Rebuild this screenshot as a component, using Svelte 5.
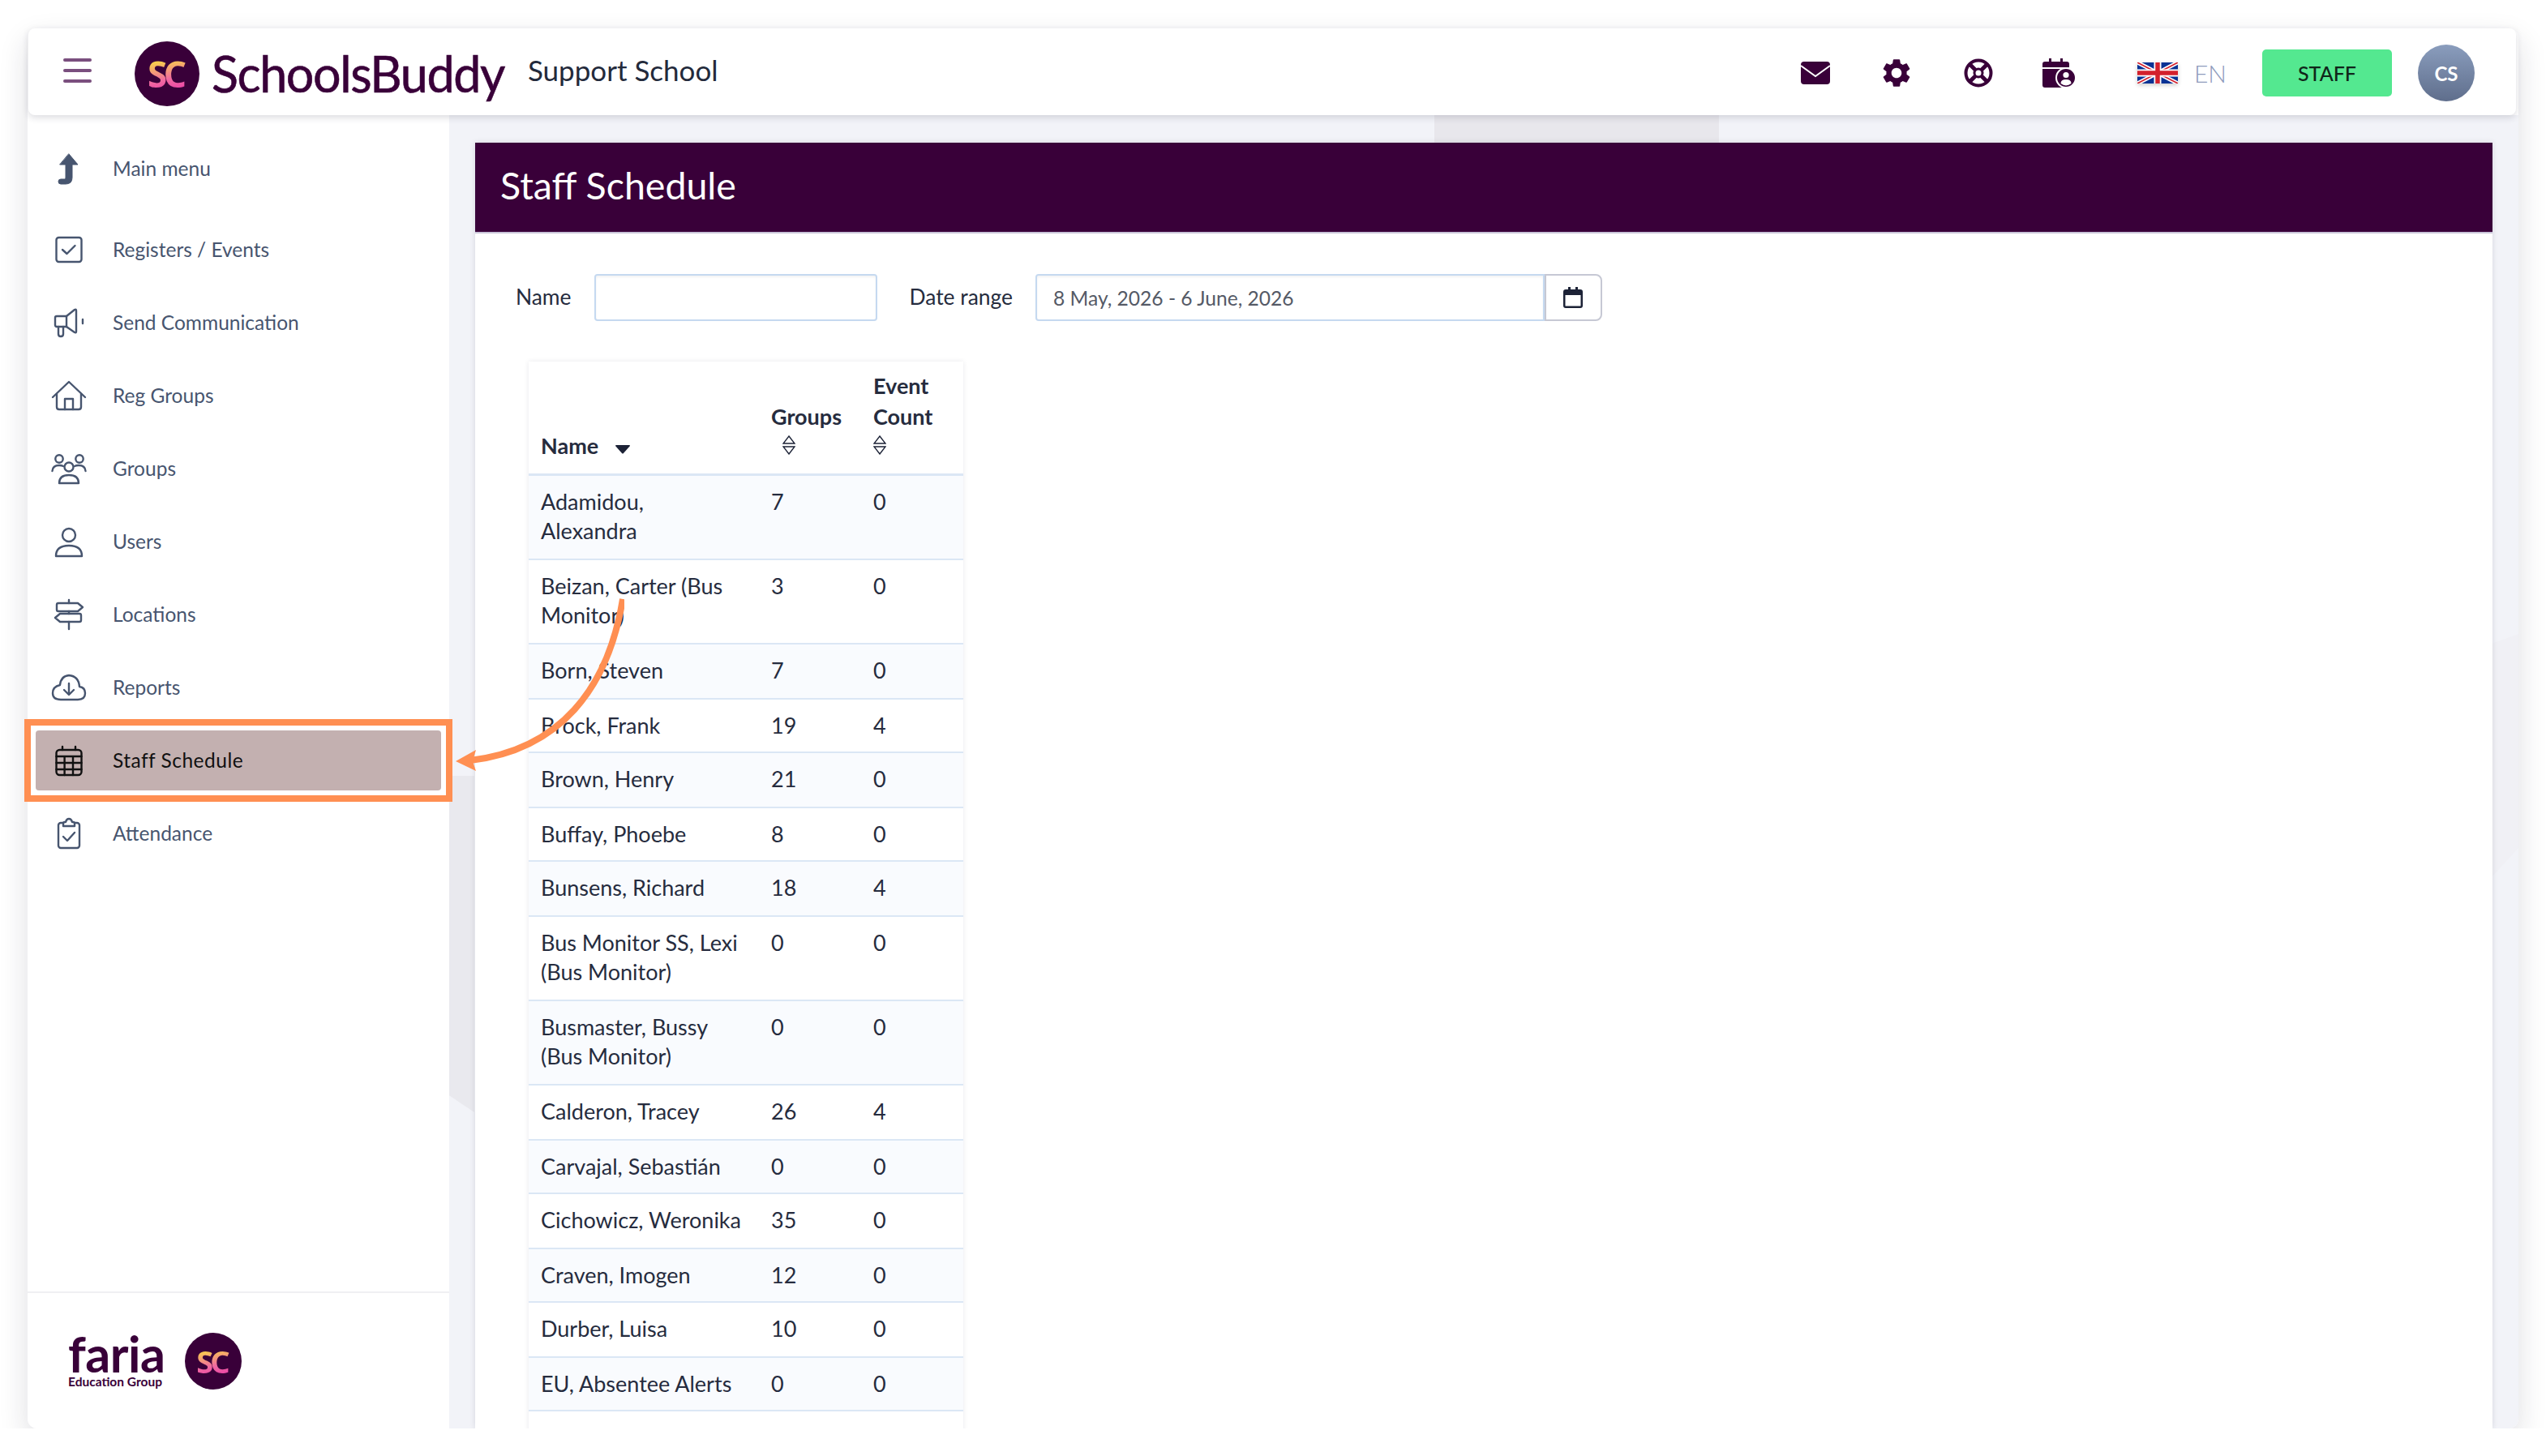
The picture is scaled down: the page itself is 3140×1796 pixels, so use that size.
<script lang="ts">
	const navItems = [
		{ label: 'Main menu', icon: 'back' },
		{ label: 'Registers / Events', icon: 'check' },
		{ label: 'Send Communication', icon: 'megaphone' },
		{ label: 'Reg Groups', icon: 'house' },
		{ label: 'Groups', icon: 'groups' },
		{ label: 'Users', icon: 'user' },
		{ label: 'Locations', icon: 'sign' },
		{ label: 'Reports', icon: 'cloud' },
		{ label: 'Staff Schedule', icon: 'calendar', active: true },
		{ label: 'Attendance', icon: 'clipboard' }
	];

	const icons: Record<string, string> = {
		back: '<path class="solid" d="M22 4 L33 17 H26 V33 Q26 41 18 41 H12 Q9 41 9 38 Q9 35 12 35 H17 Q18 35 18 33 V17 H11 Z"/>',
		check: '<rect x="6.5" y="7" width="31" height="30" rx="3"/><path d="M14 22 L19.5 27 L29.5 17"/>',
		megaphone: '<path d="M7 14 H19 L29 6 Q31 5 31 7 V33 Q31 35 29 34 L19 27 H7 Q5 27 5 25 V16 Q5 14 7 14 Z"/><path d="M9 27 V36 Q9 39 12 39 Q15 39 15 36 V27"/><path d="M19 14 V27"/><path d="M39 18 V23"/>',
		house: '<path d="M2 24 L22 5 L42 24"/><path d="M7 20 V36 Q7 39 10 39 H34 Q37 39 37 36 V20"/><path d="M17 39 V26 H27 V39"/>',
		groups: '<circle cx="10" cy="10" r="4.7"/><circle cx="35" cy="10" r="4.7"/><circle cx="22" cy="20" r="5.5"/><path d="M10 40 Q10 30 22 30 Q34 30 34 40 Z"/><path d="M1.5 25 Q2 18 10 18 Q13 18 15 19"/><path d="M42.5 25 Q42 18 34 18 Q31 18 29 19"/>',
		user: '<circle cx="22" cy="14" r="8"/><path d="M6 40 Q6 27 22 27 Q38 27 38 40 Z"/>',
		sign: '<path d="M9 8 H33 L39 13 L33 18 H9 Q7 18 7 16 V10 Q7 8 9 8 Z"/><path d="M11 21 H35 Q37 21 37 23 V29 Q37 31 35 31 H11 L5 26 Z"/><path d="M22 4 V8 M22 18 V21 M22 31 V40"/>',
		cloud: '<path d="M12 37 H33 Q42 37 42 29 Q42 22 35 21 Q34 8 22 7 Q12 8 11 19 Q2 21 2 29 Q2 37 12 37 Z"/><path d="M22 17 V30 M16 25 L22 31 L28 25"/>',
		calendar: '<rect x="6.5" y="9" width="31" height="31" rx="4"/><path d="M14 5 V9 M30 5 V9 M6.5 17 H37.5 M6.5 25 H37.5 M6.5 33 H37.5 M16.6 17 V40 M27 17 V40"/>',
		clipboard: '<rect x="9" y="9" width="26" height="31" rx="3"/><path class="fill-white" d="M15 13 V10 Q15 8 17 8 H18 Q19 4 22 4 Q25 4 26 8 H27 Q29 8 29 10 V13 Z"/><path d="M15 26 L20 31 L29 21"/>'
	};

	// rows alternate 68/66px in the reference, hence the tight flag
	const rows = [
		{ name: 'Adamidou,\nAlexandra', groups: 7, events: 0 },
		{ name: 'Beizan, Carter (Bus\nMonitor)', groups: 3, events: 0 },
		{ name: 'Born, Steven', groups: 7, events: 0 },
		{ name: 'Brock, Frank', groups: 19, events: 4, tight: true },
		{ name: 'Brown, Henry', groups: 21, events: 0 },
		{ name: 'Buffay, Phoebe', groups: 8, events: 0, tight: true },
		{ name: 'Bunsens, Richard', groups: 18, events: 4 },
		{ name: 'Bus Monitor SS, Lexi\n(Bus Monitor)', groups: 0, events: 0 },
		{ name: 'Busmaster, Bussy\n(Bus Monitor)', groups: 0, events: 0 },
		{ name: 'Calderon, Tracey', groups: 26, events: 4 },
		{ name: 'Carvajal, Sebastián', groups: 0, events: 0, tight: true },
		{ name: 'Cichowicz, Weronika', groups: 35, events: 0 },
		{ name: 'Craven, Imogen', groups: 12, events: 0, tight: true },
		{ name: 'Durber, Luisa', groups: 10, events: 0 },
		{ name: 'EU, Absentee Alerts', groups: 0, events: 0, tight: true }
	];
</script>

<div class="window">
	<header class="topbar">
		<button class="burger" type="button" aria-label="Menu"><i></i><i></i><i></i></button>
		<div class="logo-disc"><span class="sc">SC</span></div>
		<span class="wordmark">SchoolsBuddy</span>
		<span class="school">Support School</span>

		<div class="top-icons">
			<svg width="36" height="28" viewBox="0 0 36 28">
				<rect width="36" height="28" rx="4" fill="#390039" />
				<path d="M0 5 L18 18 L36 5" fill="none" stroke="#fff" stroke-width="2" />
			</svg>
			<svg width="42" height="42" viewBox="0 0 24 24" fill="#390039">
				<path d="M19.14 12.94c.04-.3.06-.61.06-.94 0-.32-.02-.64-.07-.94l2.03-1.58c.18-.14.23-.41.12-.61l-1.92-3.32c-.12-.22-.37-.29-.59-.22l-2.39.96c-.5-.38-1.03-.7-1.62-.94l-.36-2.54c-.04-.24-.24-.41-.48-.41h-3.84c-.24 0-.43.17-.47.41l-.36 2.54c-.59.24-1.13.57-1.62.94l-2.39-.96c-.22-.08-.47 0-.59.22L2.74 8.87c-.12.21-.08.47.12.61l2.03 1.58c-.05.3-.09.63-.09.94s.02.64.07.94l-2.03 1.58c-.18.14-.23.41-.12.61l1.92 3.32c.12.22.37.29.59.22l2.39-.96c.5.38 1.03.7 1.62.94l.36 2.54c.05.24.24.41.48.41h3.84c.24 0 .44-.17.47-.41l.36-2.54c.59-.24 1.13-.56 1.62-.94l2.39.96c.22.08.47 0 .59-.22l1.92-3.32c.12-.22.07-.47-.12-.61l-2.01-1.58zM12 15.6c-1.98 0-3.6-1.62-3.6-3.6s1.62-3.6 3.6-3.6 3.6 1.62 3.6 3.6-1.62 3.6-3.6 3.6z" />
			</svg>
			<svg width="36" height="36" viewBox="0 0 36 36" fill="none" stroke="#390039">
				<circle cx="18" cy="18" r="15.5" stroke-width="4" />
				<circle cx="18" cy="18" r="5" stroke-width="3" />
				<path d="M7 7 L14 14 M29 7 L22 14 M7 29 L14 22 M29 29 L22 22" stroke-width="5" />
			</svg>
			<svg width="40" height="36" viewBox="0 0 40 36">
				<path d="M8 0 h3 v4 h11 V0 h3 v4 h5 q3 0 3 3 v4 H0 V7 q0-3 3-3 h5 Z M0 13 h33 v20 q0 3-3 3 H3 q-3 0-3-3 Z" fill="#390039" />
				<circle cx="29" cy="24" r="12" fill="#390039" stroke="#fff" stroke-width="2" />
				<circle cx="29" cy="20.5" r="3.6" fill="#fff" />
				<path d="M22.5 31 q0-5 6.5-5 t6.5 5 q-3 2.4-6.5 2.4 t-6.5-2.4 Z" fill="#fff" />
			</svg>
		</div>

		<svg class="flag" width="50" height="26" viewBox="0 0 50 26">
			<rect width="50" height="26" fill="#0a3294" />
			<path d="M0 0 L50 26 M50 0 L0 26" stroke="#fff" stroke-width="5" />
			<path d="M0 0 L50 26 M50 0 L0 26" stroke="#d3202c" stroke-width="1.6" />
			<path d="M25 0 V26 M0 13 H50" stroke="#fff" stroke-width="9" />
			<path d="M25 0 V26 M0 13 H50" stroke="#d3202c" stroke-width="5.5" />
		</svg>
		<span class="lang">EN</span>
		<button class="role" type="button">STAFF</button>
		<div class="avatar">CS</div>
	</header>

	<div class="body">
		<aside class="sidebar">
			<nav>
				{#each navItems as item, i}
					<a class="nav-item" class:active={item.active} class:first={i === 0} href="#top">
						<svg class="nav-icon" width="44" height="44" viewBox="0 0 44 44">{@html icons[item.icon]}</svg>
						<span class="nav-label">{item.label}</span>
						{#if item.active}<span class="callout"></span>{/if}
					</a>
				{/each}
			</nav>
			<footer class="side-foot">
				<div class="faria">
					<span class="faria-name">faria</span>
					<span class="faria-sub">Education Group</span>
				</div>
				<div class="logo-disc small"><span class="sc">SC</span></div>
			</footer>
		</aside>

		<main class="content">
			<section class="card">
				<h1>Staff Schedule</h1>
				<form class="filters">
					<label for="name">Name</label>
					<input id="name" class="name-input" type="text" />
					<label for="range" class="range-label">Date range</label>
					<div class="range">
						<input id="range" type="text" value="8 May, 2026 - 6 June, 2026" />
						<button type="button" aria-label="Open calendar">
							<svg width="24" height="26" viewBox="0 0 24 26">
								<path d="M6 0 h3 v3 h6 V0 h3 v3 h3 q3 0 3 3 v17 q0 3-3 3 H3 q-3 0-3-3 V6 q0-3 3-3 h3 Z M2.5 10 v13 q0 .5 .5 .5 h18 q.5 0 .5-.5 V10 Z" fill="#1c2236" />
							</svg>
						</button>
					</div>
				</form>

				<table>
					<colgroup>
						<col class="col-name" />
						<col class="col-num" />
						<col class="col-num" />
					</colgroup>
					<thead>
						<tr>
							<th class="th-name">Name
								<svg class="caret" width="18" height="11" viewBox="0 0 18 11"><path d="M0 1 Q0 0 1 0 H17 Q18 0 18 1 L10 10 Q9 11 8 10 Z" fill="#1c2236" /></svg>
							</th>
							<th>Groups
								<svg class="sort indent" width="16" height="24" viewBox="0 0 16 24" fill="none" stroke="#1c2236" stroke-width="1.4"><path d="M8 1 L15 10 H1 Z M8 23 L15 14 H1 Z" /></svg>
							</th>
							<th>Event Count
								<svg class="sort" width="16" height="24" viewBox="0 0 16 24" fill="none" stroke="#1c2236" stroke-width="1.4"><path d="M8 1 L15 10 H1 Z M8 23 L15 14 H1 Z" /></svg>
							</th>
						</tr>
					</thead>
					<tbody>
						{#each rows as row}
							<tr class:tight={row.tight}>
								<td class="who">{row.name}</td>
								<td>{row.groups}</td>
								<td>{row.events}</td>
							</tr>
						{/each}
						<tr><td class="who">&nbsp;</td><td></td><td></td></tr>
					</tbody>
				</table>
			</section>
		</main>
	</div>

	<svg class="arrow" width="230" height="220" viewBox="0 0 230 220">
		<path d="M228 4 C210 115 150 190 40 203" fill="none" stroke="#ff8f52" stroke-width="8" />
		<path d="M22 204 L47 190 L43 204 L47 216 Z" fill="#ff8f52" />
	</svg>
</div>

<style>
	:global(body) {
		margin: 0;
		background: #fff;
		font-family: Lato, 'Noto Sans', sans-serif;
	}

	.window {
		position: relative;
		box-sizing: border-box;
		width: 3072px;
		height: 1727px;
		margin: 35px 0 0 34px;
		display: flex;
		flex-direction: column;
		border-radius: 12px;
		box-shadow: 0 14px 36px rgba(30, 30, 50, 0.14);
	}

	.topbar {
		position: relative;
		z-index: 2;
		flex: none;
		height: 107px;
		margin: 0 3px 0 1px;
		padding-top: 3px;
		box-sizing: border-box;
		display: flex;
		align-items: center;
		background: #fff;
		border-radius: 8px;
		box-shadow: 0 3px 8px rgba(40, 40, 60, 0.16);
	}

	.burger {
		width: 35px;
		height: 30px;
		margin: -7px 0 0 43px;
		padding: 0;
		border: 0;
		background: none;
		display: flex;
		flex-direction: column;
		justify-content: space-between;
	}

	.burger i {
		display: block;
		height: 4px;
		border-radius: 2px;
		background: #7a4f7e;
	}

	.logo-disc {
		flex: none;
		width: 80px;
		height: 80px;
		margin: 2px 0 0 53px;
		border-radius: 50%;
		background: #390039;
		display: flex;
		align-items: center;
		justify-content: center;
		font-size: 44px;
	}

	.logo-disc.small {
		width: 70px;
		height: 70px;
		margin: 0;
		font-size: 38px;
	}

	.sc {
		font-family: 'Noto Sans', sans-serif;
		font-weight: 700;
		letter-spacing: -0.1em;
		padding-right: 0.1em;
		background: linear-gradient(170deg, #f8d04a 25%, #f06aa0 60%, #ea3fa8 85%);
		-webkit-background-clip: text;
		background-clip: text;
		color: transparent;
	}

	.wordmark {
		margin-left: 15px;
		font-size: 61px;
		font-weight: 400;
		letter-spacing: -1.4px;
		color: #390039;
		-webkit-text-stroke: 0.6px #390039;
	}

	.school {
		margin: -8px 0 0 29px;
		font-size: 35px;
		color: #232a3b;
	}

	.top-icons {
		margin-left: auto;
		width: 338px;
		display: flex;
		align-items: center;
		justify-content: space-between;
	}

	.flag {
		margin-left: 77px;
		box-shadow: 0 2px 5px rgba(0, 0, 0, 0.2);
	}

	.lang {
		margin-left: 20px;
		font-size: 30px;
		font-weight: 300;
		color: #8f9cbc;
	}

	.role {
		width: 160px;
		height: 58px;
		margin-left: 44px;
		border: 0;
		border-radius: 5px;
		background: #54e890;
		color: #10261a;
		font: 500 25px Lato, sans-serif;
	}

	.avatar {
		width: 70px;
		height: 70px;
		margin: 0 51px 0 32px;
		border-radius: 50%;
		background: linear-gradient(#8a9dbd, #5f6e8c);
		color: #fff;
		font-size: 24px;
		font-weight: 700;
		display: flex;
		align-items: center;
		justify-content: center;
	}

	.body {
		flex: 1;
		min-height: 0;
		display: flex;
		position: relative;
		background: #f2f3f8;
		border-radius: 0 0 12px 12px;
	}

	/* faint shapes behind the gutters */
	.body::before {
		content: '';
		position: absolute;
		left: 520px;
		top: 815px;
		width: 31px;
		height: 415px;
		background: #e9e9ee;
		clip-path: polygon(0 0, 100% 0, 100% 100%, 0 95%);
	}

	.body::after {
		content: '';
		position: absolute;
		left: 1735px;
		top: 0;
		width: 351px;
		height: 40px;
		background: #e8e7ec;
	}

	.content::after {
		content: '';
		position: absolute;
		left: 3039px;
		top: 640px;
		width: 33px;
		height: 300px;
		background: #f0f0f5;
		clip-path: polygon(0 4%, 100% 0, 100% 88%, 0 100%);
	}

	.sidebar {
		position: relative;
		z-index: 1;
		flex: none;
		width: 520px;
		display: flex;
		flex-direction: column;
		background: #fff;
		border-radius: 0 0 0 12px;
	}

	nav {
		flex: 1;
		padding-top: 21px;
	}

	.nav-item {
		box-sizing: border-box;
		height: 90px;
		padding-left: 29px;
		display: flex;
		align-items: center;
		gap: 32px;
		font-size: 24.5px;
		color: #47556f;
		text-decoration: none;
	}

	.nav-label {
		margin-top: -2px;
	}

	.nav-item.first {
		margin-bottom: 10px;
	}

	.nav-item.active {
		position: relative;
		height: 74px;
		margin: 8px 10px;
		padding-left: 19px;
		border-radius: 4px;
		background: #c3b0b0;
		color: #111;
		letter-spacing: 0.5px;
	}

	.callout {
		position: absolute;
		inset: -14px;
		border: 8px solid #ff8f52;
		pointer-events: none;
	}

	.nav-icon {
		flex: none;
		fill: none;
		stroke: #47556f;
		stroke-width: 2.4;
		stroke-linecap: round;
		stroke-linejoin: round;
	}

	.active .nav-icon {
		stroke: #111;
	}

	.nav-icon :global(.solid) {
		fill: #47556f;
		stroke-width: 1;
	}

	.nav-icon :global(.fill-white) {
		fill: #fff;
	}

	.side-foot {
		flex: none;
		height: 169px;
		box-sizing: border-box;
		border-top: 2px solid #f0f0f3;
		padding-left: 50px;
		display: flex;
		align-items: center;
		gap: 28px;
	}

	.faria {
		width: 116px;
		display: flex;
		flex-direction: column;
		color: #390039;
	}

	.faria-name {
		font-size: 61px;
		line-height: 50px;
		font-weight: 700;
		letter-spacing: -0.5px;
	}

	.faria-sub {
		font-size: 15.5px;
		line-height: 18px;
		font-weight: 700;
		white-space: nowrap;
	}

	.content {
		flex: 1;
		min-width: 0;
		min-height: 0;
		padding: 34px 32px 0 32px;
		display: flex;
	}

	.card {
		position: relative;
		z-index: 1;
		flex: 1;
		min-height: 0;
		overflow: hidden;
		background: #fff;
		box-shadow: 0 0 7px rgba(40, 40, 70, 0.14);
	}

	h1 {
		height: 110px;
		margin: 0;
		padding-left: 31px;
		border-bottom: 2px solid #c9c5d8;
		background: #390039;
		color: #fff;
		font-size: 46.5px;
		font-weight: 400;
		line-height: 104px;
	}

	.filters {
		margin: 50px 0 0 50px;
		display: flex;
		align-items: center;
		font-size: 26.4px;
		color: #262c3e;
	}

	.filters label {
		margin-top: -2px;
	}

	.filters input {
		box-sizing: border-box;
		height: 58px;
		border: 2px solid #c5d9f0;
		border-radius: 4px;
		box-shadow: inset 0 2px 3px rgba(0, 0, 0, 0.05);
		outline: none;
	}

	.name-input {
		width: 349px;
		margin-left: 28px;
	}

	.range-label {
		margin-left: 40px;
	}

	.range {
		margin-left: 28px;
		display: flex;
	}

	.range input {
		width: 628px;
		padding-left: 20px;
		border-radius: 4px 0 0 4px;
		font: 24.6px Lato, sans-serif;
		color: #555a66;
	}

	.range button {
		width: 71px;
		height: 58px;
		padding: 0;
		border: 2px solid #c6c8d4;
		border-radius: 0 8px 8px 0;
		background: #fff;
		display: flex;
		align-items: center;
		justify-content: center;
	}

	table {
		width: 536px;
		margin: 50px 0 0 66px;
		table-layout: fixed;
		border-collapse: collapse;
		font-size: 27px;
		line-height: 36px;
		color: #262c3e;
		box-shadow: 0 0 6px rgba(40, 40, 70, 0.1);
	}

	.col-name {
		width: 284px;
	}

	.col-num {
		width: 126px;
	}

	th {
		padding: 11px 15px 23px;
		border-bottom: 3px solid #dbe7f5;
		font-weight: 700;
		line-height: 38px;
		text-align: left;
		vertical-align: bottom;
	}

	.th-name {
		padding-bottom: 15px;
	}

	.caret {
		margin-left: 14px;
	}

	.sort {
		display: block;
		margin-top: 4px;
	}

	.sort.indent {
		margin-left: 14px;
	}

	td {
		padding: 14px 15px 16px;
		border-bottom: 2px solid #dbe7f5;
		vertical-align: top;
	}

	.tight td {
		padding-bottom: 14px;
	}

	.who {
		white-space: pre-line;
	}

	tbody tr:nth-child(odd) {
		background: #f9fbfe;
	}

	.arrow {
		position: absolute;
		z-index: 3;
		left: 506px;
		top: 700px;
	}
</style>
